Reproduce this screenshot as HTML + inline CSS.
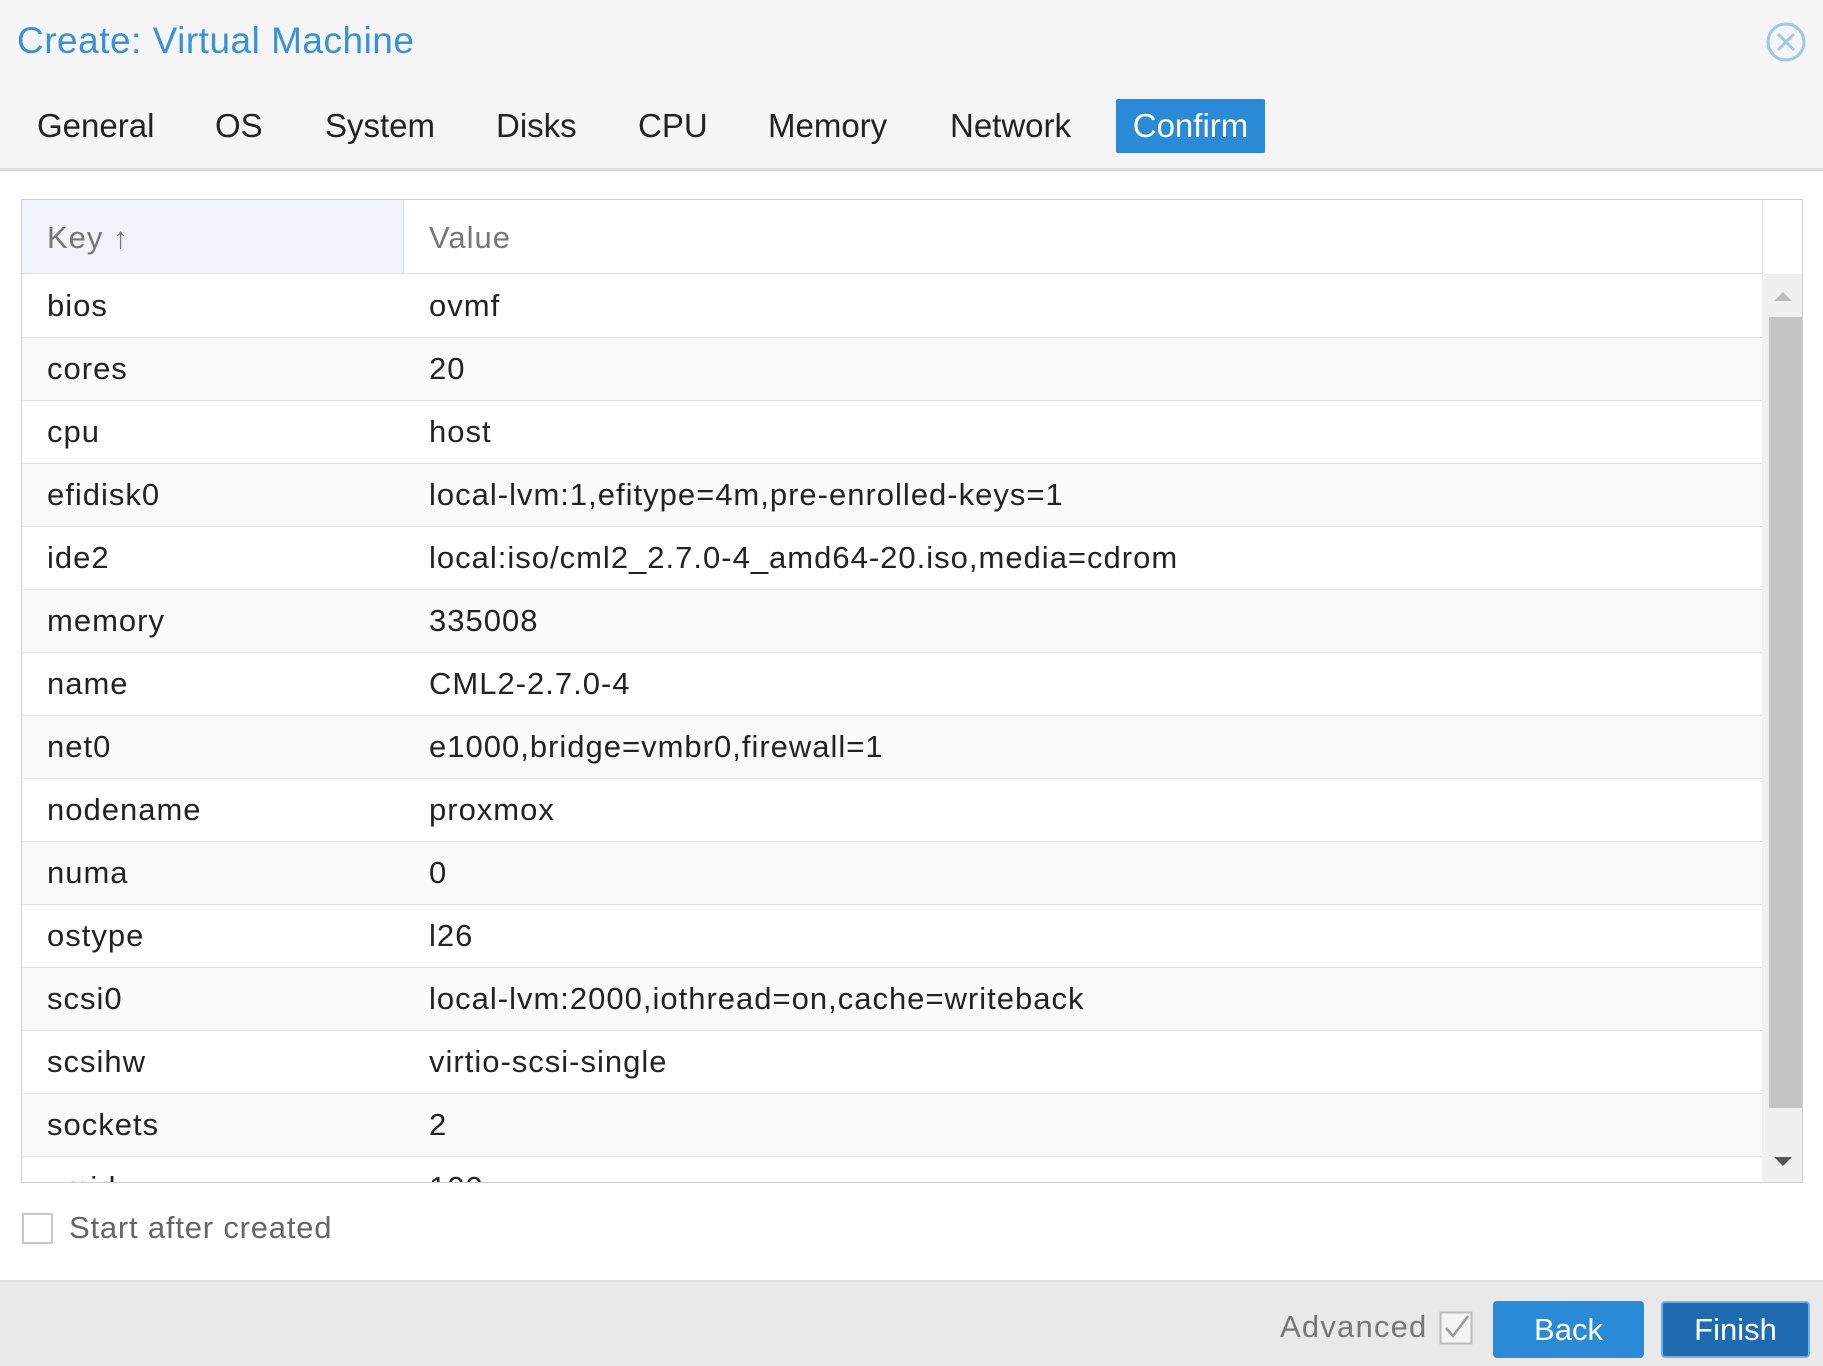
<!DOCTYPE html>
<html><head><style>
*{margin:0;padding:0;box-sizing:border-box}
body{width:1823px;height:1366px;overflow:hidden;background:#fff;font-family:"Liberation Sans",Arial,sans-serif;position:relative}
.hdr{position:absolute;left:0;top:0;width:1823px;height:171px;background:#f5f5f5;border-bottom:3px solid #dcdcdc}
.title{position:absolute;left:17px;top:20px;font-size:37px;color:#3892d4;letter-spacing:0.5px}
.tab{position:absolute;top:107px;font-size:33px;color:#222}
.conf{position:absolute;left:1116px;top:99px;width:149px;height:54px;background:#2a8ad6;color:#fff;font-size:33px;line-height:54px;text-align:center;border-radius:2px}
.grid{position:absolute;left:21px;top:199px;width:1782px;height:984px;border:1px solid #d0d0d0;overflow:hidden}
.gh{position:absolute;left:0;top:0;width:1740px;height:74px;border-bottom:1px solid #ddd;font-size:31px;color:#777}
.row{position:absolute;left:0;width:1740px;height:63px;border-bottom:1px solid #e2e2e2;font-size:31px;color:#222;line-height:62px;letter-spacing:1px}
.row span{position:absolute}
.k{left:25px}.v{left:407px}
.sb{position:absolute;left:1740px;top:74px;width:42px;height:910px;background:#f0f0f0}
</style></head><body>
<div class="hdr">
<div class="title">Create: Virtual Machine</div>
<svg style="position:absolute;left:1765px;top:21px" width="42" height="42"><circle cx="21" cy="21" r="18" fill="none" stroke="#9fc6e8" stroke-width="3"/><path d="M13 13L29 29M29 13L13 29" stroke="#9fc6e8" stroke-width="3"/></svg>
<div class="tab" style="left:37px">General</div>
<div class="tab" style="left:215px">OS</div>
<div class="tab" style="left:325px">System</div>
<div class="tab" style="left:496px">Disks</div>
<div class="tab" style="left:638px">CPU</div>
<div class="tab" style="left:768px">Memory</div>
<div class="tab" style="left:950px">Network</div>
<div class="conf">Confirm</div>
</div>
<div class="grid">
<div class="gh"><div style="position:absolute;left:0;top:0;width:382px;height:73px;background:#f0f4fa;border-right:1px solid #ddd"></div>
<span style="position:absolute;left:25px;top:20px;letter-spacing:1px">Key <span style="font-size:30px">↑</span></span><span style="position:absolute;left:407px;top:20px;letter-spacing:1px">Value</span></div>
<div style="position:absolute;left:1740px;top:0;width:1px;height:74px;background:#ddd"></div>
<div class="row" style="top:75px;background:#fff"><span class="k">bios</span><span class="v">ovmf</span></div>
<div class="row" style="top:138px;background:#fafafa"><span class="k">cores</span><span class="v">20</span></div>
<div class="row" style="top:201px;background:#fff"><span class="k">cpu</span><span class="v">host</span></div>
<div class="row" style="top:264px;background:#fafafa"><span class="k">efidisk0</span><span class="v">local-lvm:1,efitype=4m,pre-enrolled-keys=1</span></div>
<div class="row" style="top:327px;background:#fff"><span class="k">ide2</span><span class="v">local:iso/cml2_2.7.0-4_amd64-20.iso,media=cdrom</span></div>
<div class="row" style="top:390px;background:#fafafa"><span class="k">memory</span><span class="v">335008</span></div>
<div class="row" style="top:453px;background:#fff"><span class="k">name</span><span class="v">CML2-2.7.0-4</span></div>
<div class="row" style="top:516px;background:#fafafa"><span class="k">net0</span><span class="v">e1000,bridge=vmbr0,firewall=1</span></div>
<div class="row" style="top:579px;background:#fff"><span class="k">nodename</span><span class="v">proxmox</span></div>
<div class="row" style="top:642px;background:#fafafa"><span class="k">numa</span><span class="v">0</span></div>
<div class="row" style="top:705px;background:#fff"><span class="k">ostype</span><span class="v">l26</span></div>
<div class="row" style="top:768px;background:#fafafa"><span class="k">scsi0</span><span class="v">local-lvm:2000,iothread=on,cache=writeback</span></div>
<div class="row" style="top:831px;background:#fff"><span class="k">scsihw</span><span class="v">virtio-scsi-single</span></div>
<div class="row" style="top:894px;background:#fafafa"><span class="k">sockets</span><span class="v">2</span></div>
<div class="row" style="top:957px;background:#fff"><span class="k">vmid</span><span class="v">100</span></div>
<div class="sb"><div style="position:absolute;left:7px;top:43px;width:34px;height:791px;background:#c4c4c4"></div>
<div style="position:absolute;left:12px;top:18px;border-left:9px solid transparent;border-right:9px solid transparent;border-bottom:9px solid #bbb"></div>
<div style="position:absolute;left:12px;top:883px;border-left:9px solid transparent;border-right:9px solid transparent;border-top:9px solid #555"></div></div>
</div>
<div style="position:absolute;left:22px;top:1213px;width:31px;height:31px;border:2px solid #c8c8c8;background:#fff"></div>
<div style="position:absolute;left:69px;top:1210px;font-size:31px;color:#666;letter-spacing:0.8px">Start after created</div>
<div style="position:absolute;left:0;top:1280px;width:1823px;height:86px;background:#e9e9e9;border-top:2px solid #e0e0e0"></div>
<div style="position:absolute;left:1280px;top:1309px;font-size:31px;color:#777;letter-spacing:1.2px">Advanced</div>
<svg style="position:absolute;left:1439px;top:1311px" width="34" height="34"><rect x="1.5" y="1.5" width="31" height="31" fill="#f5f5f5" stroke="#bbb" stroke-width="2"/><path d="M7 17L14 25L29 5" fill="none" stroke="#999" stroke-width="2.5"/></svg>
<div style="position:absolute;left:1493px;top:1301px;width:151px;height:57px;background:#2a8ad6;color:#fff;font-size:31px;line-height:57px;text-align:center;border-radius:4px">Back</div>
<div style="position:absolute;left:1661px;top:1301px;width:149px;height:57px;background:#1f6bb0;border:2px solid #6fb0ec;color:#fff;font-size:31px;line-height:53px;text-align:center;border-radius:4px">Finish</div>
</body></html>
